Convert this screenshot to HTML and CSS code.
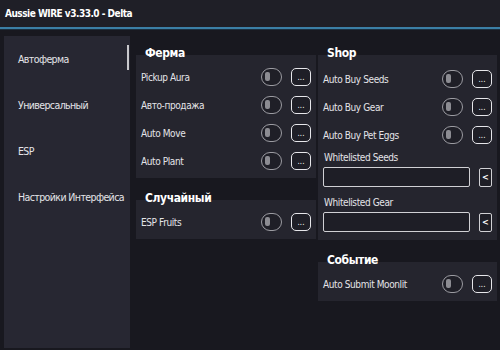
FILE: index.html
```html
<!DOCTYPE html>
<html lang="ru">
<head>
    <meta charset="UTF-8">
    <title>Aussie WIRE v3.33.0 - Delta</title>
    <link rel="stylesheet" href="styles.css">
</head>
<body>
    <header class="titlebar">Aussie WIRE v3.33.0 - Delta</header>
    <div class="app">
        <nav class="sidebar">
            <a href="#" class="tab active">Автоферма</a>
            <a href="#" class="tab">Универсальный</a>
            <a href="#" class="tab">ESP</a>
            <a href="#" class="tab">Настройки Интерфейса</a>
            <span class="scroll"></span>
        </nav>
        <main class="content">
            <div class="column">
                <h2 class="section-title">Ферма</h2>
                <div class="panel">
                    <div class="row"><span class="label">Pickup Aura</span><span class="toggle"></span><button class="more">...</button></div>
                    <div class="row"><span class="label">Авто-продажа</span><span class="toggle"></span><button class="more">...</button></div>
                    <div class="row"><span class="label">Auto Move</span><span class="toggle"></span><button class="more">...</button></div>
                    <div class="row"><span class="label">Auto Plant</span><span class="toggle"></span><button class="more">...</button></div>
                </div>
                <h2 class="section-title">Случайный</h2>
                <div class="panel">
                    <div class="row"><span class="label">ESP Fruits</span><span class="toggle"></span><button class="more">...</button></div>
                </div>
            </div>
            <div class="column">
                <h2 class="section-title">Shop</h2>
                <div class="panel panel-shop">
                    <div class="row"><span class="label">Auto Buy Seeds</span><span class="toggle"></span><button class="more">...</button></div>
                    <div class="row"><span class="label">Auto Buy Gear</span><span class="toggle"></span><button class="more">...</button></div>
                    <div class="row"><span class="label">Auto Buy Pet Eggs</span><span class="toggle"></span><button class="more">...</button></div>
                    <div class="field">
                        <label class="field-label">Whitelisted Seeds</label>
                        <div class="field-line"><input type="text" class="field-input"><button class="pick">&lt;</button></div>
                    </div>
                    <div class="field">
                        <label class="field-label">Whitelisted Gear</label>
                        <div class="field-line"><input type="text" class="field-input"><button class="pick">&lt;</button></div>
                    </div>
                </div>
                <h2 class="section-title">Событие</h2>
                <div class="panel">
                    <div class="row"><span class="label">Auto Submit Moonlit</span><span class="toggle"></span><button class="more">...</button></div>
                </div>
            </div>
        </main>
    </div>
</body>
</html>
```

FILE: styles.css
```css
body {
    margin: 0;
    width: 500px;
    height: 350px;
    overflow: hidden;
    background-color: #18181f;
    color: #e4e4e8;
    font-family: "Liberation Sans Narrow", "DejaVu Sans Condensed", sans-serif;
}
.titlebar {
    height: 27px;
    line-height: 27px;
    padding-left: 5px;
    background-color: #1f1f27;
    border-bottom: 2px solid #3b7fa6;
    box-shadow: 0 1px 0 #1b2f3f;
    color: #ffffff;
    font-size: 10px;
    font-weight: bold;
    letter-spacing: -0.5px;
}
.app {
    display: flex;
    gap: 6px;
    padding: 7px 3px 0 4px;
}
.sidebar {
    position: relative;
    width: 126px;
    height: 312px;
    background-color: #272732;
    display: flex;
    flex-direction: column;
}
.tab {
    display: block;
    height: 46px;
    line-height: 46px;
    padding-left: 14px;
    color: #e4e4e8;
    font-size: 10.5px;
    letter-spacing: -0.6px;
    white-space: nowrap;
    text-decoration: none;
}
.scroll {
    position: absolute;
    right: 1px;
    top: 9px;
    width: 2px;
    height: 25px;
    background-color: #c8c8cc;
}
.content {
    flex: 1;
    display: grid;
    grid-template-columns: 180px 179px;
    gap: 2px;
    align-items: start;
}
.section-title {
    position: relative;
    z-index: 1;
    margin: 10px 0 -5px;
    padding-left: 9px;
    line-height: 14px;
    font-size: 12px;
    font-weight: bold;
    letter-spacing: -0.4px;
    color: #ffffff;
}
.panel + .section-title {
    margin-top: 13px;
}
.panel {
    background-color: #25252e;
    padding: 8px 5px 3px;
}
.panel-shop {
    padding-top: 10px;
}
.row {
    display: flex;
    align-items: center;
    height: 28px;
}
.label {
    flex: 1;
    font-size: 10px;
    letter-spacing: -0.4px;
    white-space: nowrap;
}
.toggle {
    position: relative;
    box-sizing: border-box;
    width: 21px;
    height: 18px;
    border: 1.5px solid #9c9ca2;
    border-radius: 9px;
    background-color: #1f1f27;
}
.toggle::before {
    content: "";
    position: absolute;
    left: 3px;
    top: 3px;
    width: 5px;
    height: 9px;
    border-radius: 2px;
    background-color: #8c8c92;
}
.more {
    box-sizing: border-box;
    width: 20px;
    height: 18px;
    margin-left: 9px;
    padding: 0 0 3px;
    border: 1.5px solid #e6e6ea;
    border-radius: 5px;
    background-color: #1f1f27;
    color: #ffffff;
    font-family: inherit;
    font-size: 8px;
    line-height: 8px;
    display: flex;
    align-items: flex-end;
    justify-content: center;
}
.field {
    display: flex;
    flex-direction: column;
    margin-top: 2px;
}
.field + .field {
    margin-top: 9px;
}
.field:last-child {
    margin-bottom: 5px;
}
.field-label {
    line-height: 14px;
    padding-left: 1px;
    font-size: 10px;
    letter-spacing: -0.4px;
}
.field-line {
    display: flex;
    align-items: center;
    gap: 9px;
    margin-top: 2px;
}
.field-input {
    box-sizing: border-box;
    width: 147px;
    height: 20px;
    margin: 0;
    border: 1.5px solid #d0d0d4;
    border-radius: 2px;
    background-color: #1e1e26;
}
.pick {
    box-sizing: border-box;
    width: 13px;
    height: 19px;
    padding: 0;
    border: 1px solid #d0d0d4;
    border-radius: 2px;
    background-color: #1e1e26;
    color: #ffffff;
    font-family: inherit;
    font-size: 9px;
    font-weight: bold;
}
```
